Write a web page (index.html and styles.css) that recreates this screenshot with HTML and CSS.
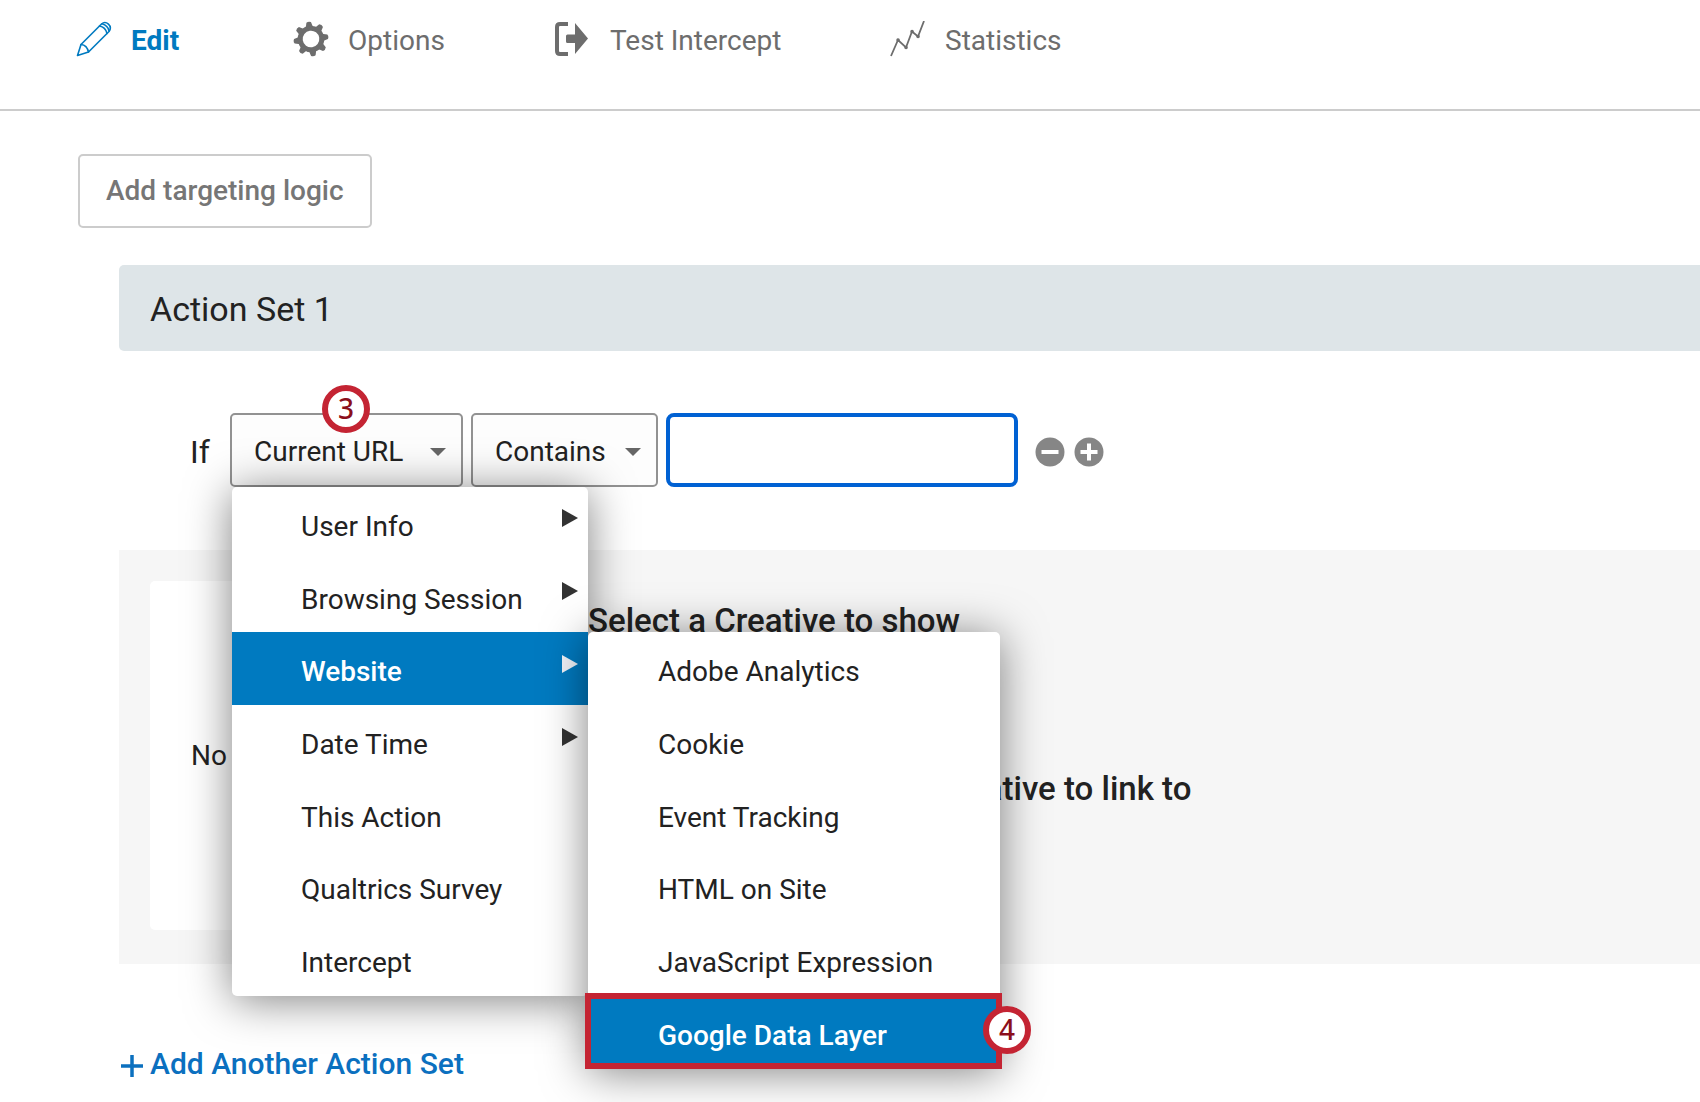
FILE: index.html
```html
<!DOCTYPE html>
<html lang="en">
<head>
<meta charset="utf-8">
<meta name="viewport" content="width=device-width, initial-scale=1">
<title>Edit Intercept</title>
<link rel="stylesheet" href="styles.css">
</head>
<body>
<nav class="toolbar" aria-label="Intercept">
  <a class="tool tool-active" href="#edit" aria-current="page">
    <svg class="tool-icon" viewBox="0 0 36 36" fill="none" stroke="currentColor" stroke-width="1.6" stroke-linejoin="round" stroke-linecap="round">
      <path d="M1.500 34.500L5 23.500L25.500 3C30-1 37 5 33 10.500L12.500 31Z"/>
      <path d="M5 23.500Q11 24 12.500 31M23.500 5Q29.500 6 31 12.500M26 2.800Q32 4.500 33 10"/>
    </svg>
    <span>Edit</span>
  </a>
  <a class="tool" href="#options">
    <svg class="tool-icon" viewBox="0 0 36 36">
      <g transform="translate(18 18) rotate(-8)" fill="currentColor">
        <circle r="10.800" fill="none" stroke="currentColor" stroke-width="5"/>
        <g id="teeth">
          <path id="tooth" d="M-3.800-11L-2.300-16.800Q0-18.200 2.300-16.800L3.800-11Z"/>
          <use href="#tooth" transform="rotate(45)"/>
          <use href="#tooth" transform="rotate(90)"/>
          <use href="#tooth" transform="rotate(135)"/>
        </g>
        <use href="#teeth" transform="rotate(180)"/>
      </g>
    </svg>
    <span>Options</span>
  </a>
  <a class="tool" href="#test">
    <svg class="tool-icon" viewBox="0 0 36 36">
      <path d="M13 3H5Q2 3 2 6V30Q2 33 5 33H13" fill="none" stroke="currentColor" stroke-width="4"/>
      <path d="M20 2L33 17.500L20 33V22H12.500Q11 22 11 20.500V15Q11 13.500 12.500 13.500H20Z" fill="currentColor"/>
    </svg>
    <span>Test Intercept</span>
  </a>
  <a class="tool" href="#statistics">
    <svg class="tool-icon" viewBox="0 0 36 36" fill="none" stroke="currentColor" stroke-width="1.800">
      <path d="M1 35L8 19L16 26.500L22 10.500L28 15.500L34 0"/>
      <path d="M8 19h.1M16 26.500h.1M22 10.500h.1M28 15.500h.1" stroke-width="3.500" stroke-linecap="round"/>
    </svg>
    <span>Statistics</span>
  </a>
</nav>

<main class="content">
  <button class="targeting" type="button">Add targeting logic</button>

  <section class="action-set">
    <h2 class="set-title">Action Set 1</h2>

    <div class="condition">
      <label class="if" for="subject">If</label>
      <div class="picker picker-subject">
        <select id="subject" class="select"><option>Current URL</option></select>
        <svg class="caret" viewBox="0 0 16 8"><path d="M0 0H16L8 8Z" fill="#666"/></svg>
        <span class="badge badge-top">3</span>
        <ul class="menu">
          <li class="entry"><button class="item" type="button">User Info<svg class="arrow" viewBox="0 0 16 18"><path d="M0 0L16 9L0 18Z"/></svg></button></li>
          <li class="entry"><button class="item" type="button">Browsing Session<svg class="arrow" viewBox="0 0 16 18"><path d="M0 0L16 9L0 18Z"/></svg></button></li>
          <li class="entry">
            <button class="item item-on" type="button" aria-expanded="true">Website<svg class="arrow" viewBox="0 0 16 18"><path d="M0 0L16 9L0 18Z"/></svg></button>
            <ul class="menu submenu">
              <li class="entry"><button class="item" type="button">Adobe Analytics</button></li>
              <li class="entry"><button class="item" type="button">Cookie</button></li>
              <li class="entry"><button class="item" type="button">Event Tracking</button></li>
              <li class="entry"><button class="item" type="button">HTML on Site</button></li>
              <li class="entry"><button class="item" type="button">JavaScript Expression</button></li>
              <li class="entry marked"><button class="item item-on" type="button">Google Data Layer</button><span class="badge badge-side">4</span></li>
            </ul>
          </li>
          <li class="entry"><button class="item" type="button">Date Time<svg class="arrow" viewBox="0 0 16 18"><path d="M0 0L16 9L0 18Z"/></svg></button></li>
          <li class="entry"><button class="item" type="button">This Action</button></li>
          <li class="entry"><button class="item" type="button">Qualtrics Survey</button></li>
          <li class="entry"><button class="item" type="button">Intercept</button></li>
        </ul>
      </div>
      <div class="picker picker-operator">
        <select class="select" aria-label="Operator"><option>Contains</option></select>
        <svg class="caret" viewBox="0 0 16 8"><path d="M0 0H16L8 8Z" fill="#666"/></svg>
      </div>
      <input class="value" type="text" aria-label="Value">
      <div class="row-actions">
        <button class="round" type="button" aria-label="Remove condition">
          <svg viewBox="0 0 30 30"><circle cx="15" cy="15" r="14.500" fill="#868686"/><path d="M6.500 15H23.500" stroke="#fff" stroke-width="4"/></svg>
        </button>
        <button class="round" type="button" aria-label="Add condition">
          <svg viewBox="0 0 30 30"><circle cx="15" cy="15" r="14.500" fill="#868686"/><path d="M6.500 15H23.500M15 6.500V23.500" stroke="#fff" stroke-width="4"/></svg>
        </button>
      </div>
    </div>

    <div class="creative">
      <div class="preview">No</div>
      <div class="choices">
        <p class="choice">Select a Creative to show</p>
        <p class="choice choice-link">Select a Creative to link to</p>
      </div>
    </div>

    <a class="add-set" href="#add">
      <svg class="plus" viewBox="0 0 22 22"><path d="M0 11H22M11 0V22" stroke="currentColor" stroke-width="3.500"/></svg>
      <span>Add Another Action Set</span>
    </a>
  </section>
</main>
</body>
</html>
```
FILE: styles.css
```css
* {
  box-sizing: border-box;
}

body {
  min-height: 100vh;
  margin: 0;
  background: #fff;
  color: #222;
  font-family: Roboto, "Noto Sans", sans-serif;
  font-size: 28px;
  line-height: 36px;
}

button,
select,
input {
  font: inherit;
  color: inherit;
}

svg {
  display: block;
  flex: none;
}

.toolbar {
  display: grid;
  grid-template-columns: 217px 262px 335px auto;
  padding: 20px 0 51px 76px;
  border-bottom: 2px solid #ccc;
}

.tool {
  display: flex;
  align-items: center;
  gap: 19px;
  height: 38px;
  color: #6d6d6d;
  text-decoration: none;
}

.tool span {
  padding-top: 4px;
}

.tool-active {
  color: #007ac0;
  font-weight: 700;
}

.tool-icon {
  width: 36px;
  height: 36px;
}

.content {
  padding: 43px 0 24px 78px;
}

.targeting {
  display: block;
  height: 74px;
  padding: 0 26px;
  border: 2px solid #ccc;
  border-radius: 5px;
  background: #fff;
  color: #767676;
  font-weight: 500;
}

.action-set {
  margin: 37px 0 0 41px;
}

.set-title {
  margin: 0;
  padding: 24px 31px 22px;
  border-radius: 5px 0 0 5px;
  background: #dee5e8;
  font-size: 34px;
  font-weight: 400;
  line-height: 40px;
}

.condition {
  display: flex;
  align-items: center;
  gap: 8px;
  margin-top: 62px;
  padding-left: 71px;
}

.if {
  width: 32px;
  padding-top: 4px;
  font-size: 32px;
}

.picker {
  position: relative;
}

.picker-subject {
  width: 233px;
}

.picker-operator {
  width: 187px;
}

.select {
  display: block;
  width: 100%;
  height: 74px;
  padding: 4px 40px 0 22px;
  border: 2px solid #929292;
  border-radius: 5px;
  background: #fdfdfd;
  appearance: none;
}

.caret {
  position: absolute;
  top: 35px;
  right: 17px;
  width: 16px;
  height: 8px;
}

.value {
  width: 352px;
  height: 74px;
  padding: 0 20px;
  border: 4px solid #0061d3;
  border-radius: 8px;
  background: #fff;
  outline: 0;
}

.row-actions {
  display: flex;
  gap: 9px;
  padding: 4px 0 0 9px;
}

.round {
  width: 30px;
  height: 30px;
  padding: 0;
  border: 0;
  background: none;
}

.menu {
  position: absolute;
  z-index: 2;
  top: 74px;
  left: 2px;
  display: flex;
  flex-direction: column;
  width: 356px;
  height: 509px;
  margin: 0;
  padding: 0;
  border-radius: 5px;
  background: #fff;
  box-shadow: 0 4px 45px rgba(0, 0, 0, 0.5);
  list-style: none;
}

.submenu {
  top: 0;
  left: 100%;
  width: 412px;
  height: 436px;
}

.entry {
  position: relative;
  flex: 1;
}

.item {
  display: flex;
  align-items: center;
  justify-content: space-between;
  width: 100%;
  height: 100%;
  padding: 7px 10px 0 69px;
  border: 0;
  background: none;
  text-align: left;
}

.submenu .item {
  padding-left: 70px;
}

.item-on {
  background: #007ac0;
  color: #fff;
  font-weight: 500;
}

.arrow {
  width: 16px;
  height: 18px;
  margin-bottom: 17px;
  fill: #333;
}

.item-on .arrow {
  fill: #f2f4fa;
}

/* Callout frame round the chosen entry */
.marked::after {
  position: absolute;
  inset: -3px -2px -1px -3px;
  border: 6px solid #c42433;
  content: "";
}

.badge {
  position: absolute;
  z-index: 3;
  width: 48px;
  height: 48px;
  border: 6px solid #c42433;
  border-radius: 50%;
  background: #fff;
  color: #8b0f1c;
  font-family: "Noto Sans", sans-serif;
  font-weight: 500;
  line-height: 35px;
  text-align: center;
}

.badge-top {
  top: -28px;
  left: 92px;
}

.badge-side {
  top: 10px;
  right: -31px;
}

.creative {
  display: flex;
  margin-top: 63px;
  padding: 31px 31px 34px;
  background: #f6f6f6;
}

.preview {
  display: flex;
  align-items: center;
  width: 407px;
  height: 349px;
  padding-left: 41px;
  border-radius: 5px;
  background: #fff;
}

.choices {
  margin-left: 31px;
  font-size: 33px;
  font-weight: 500;
}

.choice {
  margin: 22px 0 0;
}

.choice-link {
  margin: 132px 0 0 220px;
}

.add-set {
  display: inline-flex;
  align-items: center;
  gap: 7px;
  margin: 82px 0 0 2px;
  color: #0b70bf;
  font-size: 30px;
  font-weight: 500;
  text-decoration: none;
}

.plus {
  width: 22px;
  height: 22px;
  margin-top: 4px;
}
```
